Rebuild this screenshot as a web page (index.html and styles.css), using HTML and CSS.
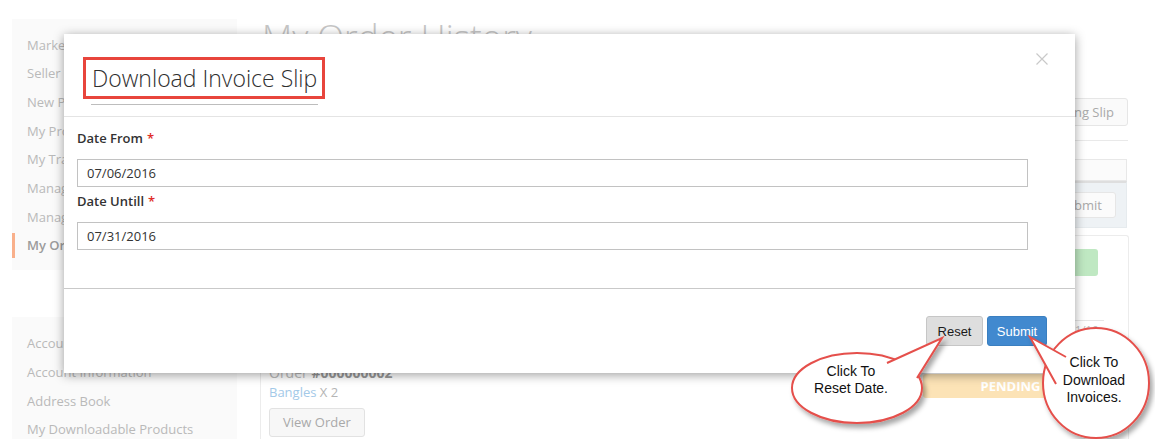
FILE: index.html
```html
<!DOCTYPE html>
<html lang="en">
<head>
<meta charset="utf-8">
<title>My Order History</title>
<link rel="stylesheet" href="styles.css">
</head>
<body>
<div class="page">
  <aside class="sidebar">
    <ul class="nav">
      <li>Marketplace</li>
      <li>Seller Profile</li>
      <li>New Product</li>
      <li>My Product List</li>
      <li>My Transaction List</li>
      <li>Manage Print PDF Header Info</li>
      <li>Manage Shipping</li>
      <li class="active">My Order History</li>
    </ul>
    <ul class="nav nav-account">
      <li>Account Dashboard</li>
      <li>Account Information</li>
      <li>Address Book</li>
      <li>My Downloadable Products</li>
    </ul>
  </aside>
  <main class="main">
    <h1 class="page-title">My Order History</h1>
    <div class="toolbar">
      <button class="btn-ghost">Download Invoice Slip</button>
      <button class="btn-ghost">Download Shipping Slip</button>
    </div>
    <div class="filter">
      <div class="filter-head"></div>
      <div class="filter-body"><button class="btn-ghost btn-small">Submit</button></div>
    </div>
    <div class="orders">
      <div class="order-row">
        <div class="order-info"></div>
        <div class="status status-complete">COMPLETE</div>
      </div>
      <div class="order-row order-row-2">
        <div class="order-info">
          <div class="order-title">Order <b>#000000002</b></div>
          <div class="order-items"><span class="link">Bangles</span> X 2</div>
          <button class="btn-ghost btn-view">View Order</button>
        </div>
        <div class="order-side">
          <div class="order-date">07/01/16</div>
          <div class="status status-pending">PENDING</div>
        </div>
      </div>
    </div>
  </main>
</div>

<div class="modal">
  <div class="modal-header">
    <div class="title-wrap">
      <h2 class="modal-title">Download Invoice Slip</h2>
      <div class="title-rule"></div>
    </div>
    <svg class="modal-close" width="12" height="12" viewBox="0 0 12 12"><path d="M0.5 0.5 L11.5 11.5 M11.5 0.5 L0.5 11.5"/></svg>
  </div>
  <div class="modal-body">
    <div class="field-label">Date From<span class="req">*</span></div>
    <input class="field-input gap" type="text" value="07/06/2016">
    <div class="field-label">Date Untill<span class="req">*</span></div>
    <input class="field-input" type="text" value="07/31/2016">
  </div>
  <div class="modal-footer">
    <button class="btn btn-reset">Reset</button>
    <button class="btn btn-submit">Submit</button>
  </div>
</div>

<svg class="callouts" width="1155" height="439" viewBox="0 0 1155 439">
  <defs>
    <filter id="sh" x="-30%" y="-30%" width="160%" height="160%">
      <feDropShadow dx="3" dy="4" stdDeviation="2.5" flood-color="#000" flood-opacity="0.35"/>
    </filter>
  </defs>
  <g class="bubble" filter="url(#sh)">
    <ellipse cx="857" cy="388" rx="65" ry="35"/>
    <path d="M887 363 L942 338 L917 378"/>
  </g>
  <g class="bubble" filter="url(#sh)">
    <ellipse cx="1096" cy="383" rx="53" ry="55"/>
    <path d="M1056 384 L1030 337 L1066 357"/>
  </g>
  <text class="callout-text" text-anchor="middle"><tspan x="851" y="376">Click To</tspan><tspan x="851" y="393">Reset Date.</tspan></text>
  <text class="callout-text" text-anchor="middle"><tspan x="1094" y="367">Click To</tspan><tspan x="1094" y="384.5">Download</tspan><tspan x="1094" y="402">Invoices.</tspan></text>
</svg>
</body>
</html>
```

FILE: styles.css
```css
body {
  margin: 0;
  width: 1155px;
  height: 439px;
  overflow: hidden;
  position: relative;
  background: #fff;
  font-family: "Open Sans", "Liberation Sans", sans-serif;
}

.page {
  display: flex;
  gap: 23px;
  padding: 19px 0 0 12px;
}

.sidebar {
  width: 225px;
  flex: none;
}

.nav {
  list-style: none;
  margin: 0;
  padding: 13.5px 0 11.6px;
  background: #fafafa;
  display: flex;
  flex-direction: column;
  gap: 3.7px;
}

.nav li {
  line-height: 25px;
  font-size: 13px;
  color: #b9b9b9;
  padding-left: 15px;
  white-space: nowrap;
  overflow: hidden;
}

.nav li.active {
  border-left: 3px solid #f9b08b;
  padding-left: 12px;
  font-weight: 600;
  color: #9c9c9c;
}

.nav-account {
  margin-top: 47px;
  padding-top: 14.5px;
}

.main {
  width: 869px;
  flex: none;
}

.page-title {
  margin: 0;
  padding-left: 2px;
  font-size: 35px;
  font-weight: 300;
  line-height: 36px;
  color: #c6c6c6;
}

.toolbar {
  display: flex;
  justify-content: flex-end;
  gap: 8px;
  margin: 43px 1px 0 0;
  padding-bottom: 14px;
  border-bottom: 1px solid #e9e9e9;
}

.btn-ghost {
  height: 28px;
  padding: 0 13px;
  border: 1px solid #e6e6e6;
  border-radius: 3px;
  background: #fafafa;
  color: #a9a9a9;
  font: 13px "Open Sans", sans-serif;
  flex: none;
}

.filter {
  margin: 18px 2px 0 0;
}

.filter-head {
  height: 20px;
  border: 1px solid #e8e8e8;
  background: #fbfbfb;
}

.filter-body {
  height: 44px;
  border: 1px solid #e6ebee;
  border-top: 2px solid #dedede;
  background: #eef2f5;
  display: flex;
  justify-content: flex-end;
  align-items: center;
  padding-right: 10px;
}

.btn-small {
  height: 26px;
  padding: 0 13px;
  background: #fbfbfb;
}

.orders {
  margin-top: 7px;
  border: 1px solid #ececec;
  border-bottom: none;
  border-radius: 3px 3px 0 0;
  height: 220px;
}

.order-row {
  display: flex;
  justify-content: space-between;
  margin-right: 24px;
  padding: 13px 6px 0 8px;
  height: 71px;
  border-bottom: 1px solid #e6e6e6;
}

.order-row-2 {
  height: auto;
  padding-top: 0;
  border-bottom: none;
}

.status {
  width: 175px;
  border-radius: 3px;
  color: #fff;
  font-weight: 700;
  font-size: 13px;
  text-align: center;
  flex: none;
}

.status-complete {
  height: 27px;
  line-height: 27px;
  background: #bfe8c2;
}

.status-pending {
  height: 24px;
  line-height: 24px;
  background: #fce3b6;
  margin-top: 37px;
}

.order-info {
  display: flex;
  flex-direction: column;
  align-items: flex-start;
}

.order-title {
  padding-top: 41.6px;
  font-size: 14px;
  line-height: 20px;
  color: #bbb;
}

.order-title b {
  color: #9a9a9a;
}

.order-items {
  font-size: 13px;
  line-height: 18px;
  color: #b5b5b5;
}

.link {
  color: #a3c9e8;
}

.btn-view {
  margin-top: 7px;
  height: 29px;
  background: #f7f7f7;
  border-color: #e2e2e2;
}

.order-side {
  display: flex;
  flex-direction: column;
  align-items: flex-end;
}

.order-date {
  margin-top: 2px;
  font-size: 11px;
  line-height: 14px;
  color: #bbb;
}

/* Modal */
.modal {
  position: absolute;
  left: 64px;
  top: 34px;
  width: 1011px;
  height: 339px;
  background: #fff;
  box-shadow: 0 2px 10px rgba(0, 0, 0, 0.38);
}

.modal-header {
  display: flex;
  justify-content: space-between;
  align-items: flex-start;
  padding: 23px 27px 11px 19px;
  border-bottom: 1px solid #e4e4e4;
}

.title-wrap {
  display: flex;
  flex-direction: column;
  align-items: flex-start;
}

.modal-title {
  margin: 0;
  padding: 0 5px 0 6px;
  border: 3px solid #e8453c;
  font-size: 23px;
  font-weight: 300;
  line-height: 36px;
  color: #2f2f2f;
}

.title-rule {
  margin: 5px 0 0 8px;
  width: 227px;
  height: 1px;
  background: #bdbdbd;
}

.modal-close {
  margin-top: -4px;
}

.modal-close path {
  stroke: #c9c9c9;
  stroke-width: 1.2;
  fill: none;
}

.modal-body {
  padding: 12px 47px 38px 13px;
}

.field-label {
  font-size: 13px;
  font-weight: 600;
  line-height: 18px;
  color: #333;
  margin-bottom: 12px;
}

.req {
  color: #e02b27;
  margin-left: 4px;
}

.field-input {
  display: block;
  width: 951px;
  height: 28px;
  box-sizing: border-box;
  margin: 0;
  padding: 0 9px;
  border: 1px solid #c2c2c2;
  border-radius: 0;
  font: 13px "Open Sans", sans-serif;
  color: #333;
  background: #fff;
}

.field-input.gap {
  margin-bottom: 5px;
}

.modal-footer {
  border-top: 1px solid #c9c9c9;
  padding: 27px 28px;
  display: flex;
  justify-content: flex-end;
  gap: 4px;
}

.btn {
  height: 30px;
  border-radius: 3px;
  font: 13px "Liberation Sans", Arial, sans-serif;
  padding: 0;
}

.btn-reset {
  width: 57px;
  background: #dedede;
  border: 1px solid #c6c6c6;
  color: #1a1a1a;
}

.btn-submit {
  width: 60px;
  background: #4189cf;
  border: 1px solid #3a7fc0;
  color: #fff;
}

/* Annotation callouts */
.callouts {
  position: absolute;
  left: 0;
  top: 0;
  pointer-events: none;
}

.bubble ellipse,
.bubble path {
  fill: #fff;
  stroke: #e5504b;
  stroke-width: 2;
}

.callout-text {
  font-family: "Liberation Sans", Arial, sans-serif;
  font-size: 14px;
  fill: #111;
}
```
